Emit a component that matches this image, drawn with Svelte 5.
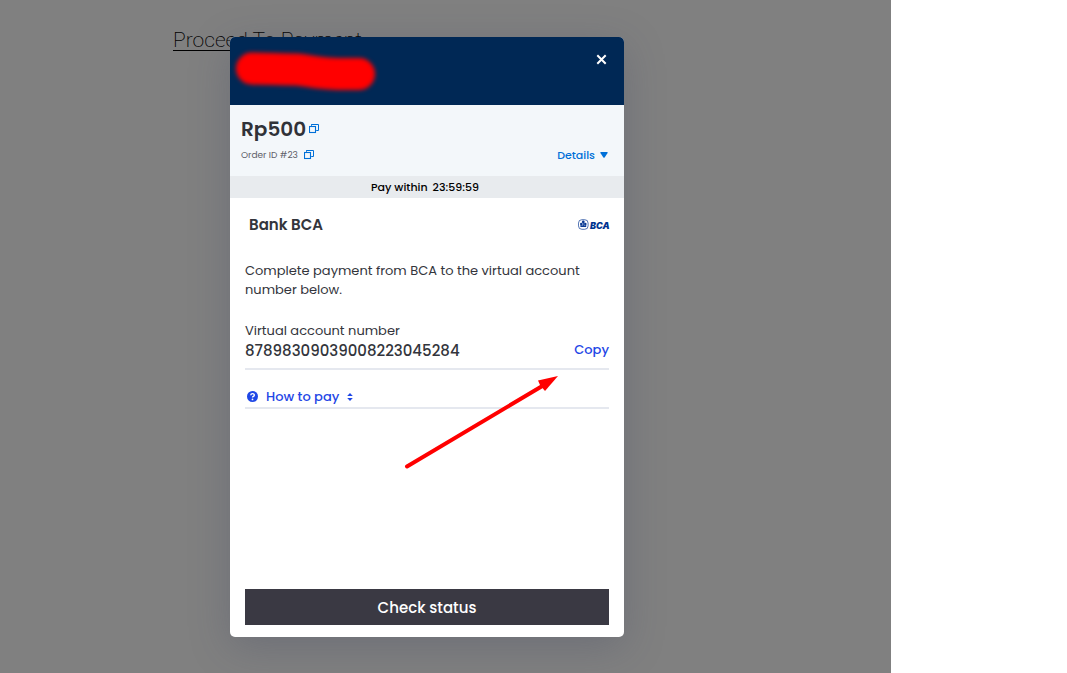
<script>
  let order = { id: 23, amount: 'Rp500' };
  let account = '87898309039008223045284';
  let remaining = '23:59:59';
  let open = true;

  function copy(text) {
    navigator.clipboard?.writeText(String(text));
  }
</script>

{#snippet copyIcon()}
  <svg width="10" height="10" viewBox="0 0 10 10" fill="none" stroke="currentColor" aria-hidden="true">
    <rect x="0.5" y="2.5" width="6" height="6" stroke-width="1.1" />
    <path d="M2.5 0.5H9.5V6.5H8" />
    <path d="M2.5 0v2M7 6.5h2" stroke-width="0.8" />
  </svg>
{/snippet}

<div class="page">
  <main class="shop">
    <a class="proceed" href="#pay">Proceed To Payment</a>

    {#if open}
      <div class="overlay">
        <div class="modal" role="dialog" aria-label="Payment">
          <header>
            <svg class="merchant" width="146" height="46" viewBox="0 0 146 46" aria-hidden="true">
              <path d="M20 18.5C38 19 50 19 64 19.5S82 25 127 24" />
            </svg>
            <button class="close" type="button" aria-label="Close" on:click={() => (open = false)}>
              <svg width="11" height="11" viewBox="0 0 11 11" aria-hidden="true">
                <path d="M1.3 1.3l8.4 8.4M9.7 1.3l-8.4 8.4" stroke="#fff" stroke-width="2" />
              </svg>
            </button>
          </header>

          <section class="summary">
            <div class="amount">
              <strong>{order.amount}</strong>
              <button type="button" aria-label="Copy amount" on:click={() => copy(order.amount)}>{@render copyIcon()}</button>
            </div>
            <div class="order">
              <span>Order ID #{order.id}</span>
              <button type="button" aria-label="Copy order ID" on:click={() => copy(order.id)}>{@render copyIcon()}</button>
              <button class="details" type="button">
                Details
                <svg width="8" height="6" viewBox="0 0 8 6" fill="currentColor" aria-hidden="true">
                  <path d="M1 0h6q1.2 0 .6 1L4.6 5.4q-.6.8-1.2 0L.4 1Q-.2 0 1 0z" />
                </svg>
              </button>
            </div>
          </section>

          <div class="timer"><span>Pay within</span><span>{remaining}</span></div>

          <section class="content">
            <div class="bank">
              <h1>Bank BCA</h1>
              <svg width="33" height="12" viewBox="0 0 33 12" role="img" aria-label="BCA">
                <rect x="1.5" y="0.7" width="9.6" height="9.6" rx="3.4" fill="none" stroke="#0a3a94" stroke-width="0.7" />
                <circle cx="6.3" cy="3" r="1.4" fill="#0a3a94" />
                <circle cx="4.3" cy="5" r="1.3" fill="#0a3a94" />
                <circle cx="8.3" cy="5" r="1.3" fill="#0a3a94" />
                <path d="M5.9 4h.8l.2 2.6 2.3-.6v2H3.4V6l2.3.6z" fill="#0a3a94" />
                <text x="13" y="10">BCA</text>
              </svg>
            </div>

            <p>Complete payment from BCA to the virtual account number below.</p>

            <div class="account">
              <div>
                <div class="label">Virtual account number</div>
                <div class="number">{account}</div>
              </div>
              <button type="button" on:click={() => copy(account)}>Copy</button>
            </div>

            <button class="howto" type="button">
              <svg width="11" height="11" viewBox="0 0 11 11" aria-hidden="true">
                <circle cx="5.5" cy="5.5" r="5.5" fill="#1f47e6" />
                <path d="M3.8 4.3c0-2.2 3.5-2.2 3.5-.1 0 1.2-1.8 1.2-1.8 2.4" fill="none" stroke="#fff" stroke-width="1.4" />
                <circle cx="5.5" cy="8.4" r="0.9" fill="#fff" />
              </svg>
              <span>How to pay</span>
              <svg width="6" height="8" viewBox="0 0 6 8" fill="#1f47e6" aria-hidden="true">
                <path d="M3 0l2.8 3H.2zM3 8L.2 5h5.6z" />
              </svg>
            </button>

            <button class="status" type="button">Check status</button>
          </section>

          <svg class="arrow" width="154" height="94" viewBox="0 0 154 94" aria-hidden="true">
            <path d="M3 90.5L140 9" stroke="#f00" stroke-width="4" stroke-linecap="round" />
            <path d="M154 0L134 4.5L136 9L141 15z" fill="#f00" />
          </svg>
        </div>
      </div>
    {/if}
  </main>
</div>

<style>
  :global(body) {
    margin: 0;
    background: #fff;
  }
  .page {
    min-height: 100vh;
    padding-right: 176px;
    box-sizing: border-box;
    display: flex;
    font-family: Poppins, Inter, sans-serif;
    color: #33353c;
  }
  .shop {
    flex: 1;
    position: relative;
    background: #808080;
    padding: 27px 0 0 173px;
  }
  .proceed {
    font: 200 21px/26px Roboto, sans-serif;
    color: #000;
    text-underline-offset: 3px;
    text-decoration-thickness: 1px;
  }
  .overlay {
    position: absolute;
    inset: 0;
    padding: 37px 37px 36px 0;
    display: flex;
    justify-content: center;
    align-items: stretch;
  }
  .modal {
    position: relative;
    width: 394px;
    display: flex;
    flex-direction: column;
    background: #fff;
    border-radius: 5px;
    box-shadow: 0 10px 40px rgba(50, 60, 90, 0.25);
  }
  button {
    font: inherit;
    padding: 0;
    border: none;
    background: none;
    color: inherit;
    cursor: pointer;
  }
  svg {
    display: block;
    flex: none;
  }
  header {
    height: 68px;
    display: flex;
    justify-content: space-between;
    align-items: flex-start;
    background: #002855;
    border-radius: 5px 5px 0 0;
  }
  .merchant {
    margin: 13px 0 0 2px;
    overflow: visible;
    filter: blur(2px);
  }
  .merchant path {
    fill: none;
    stroke: #f00;
    stroke-width: 32;
    stroke-linecap: round;
  }
  .close {
    margin: 17px 17px 0 0;
  }
  .summary {
    padding: 12px 16px 11px 11px;
    background: #f3f7fa;
  }
  .amount {
    display: flex;
    align-items: center;
    gap: 3px;
    line-height: 24px;
    color: #0070d8;
  }
  .amount strong {
    font-size: 20px;
    font-weight: 600;
    color: #303238;
  }
  .order {
    display: flex;
    align-items: center;
    gap: 6px;
    margin-top: 4px;
    font-size: 9px;
    line-height: 20px;
    color: #0070d8;
  }
  .order span {
    color: #5d6068;
  }
  .details {
    display: flex;
    align-items: center;
    gap: 5px;
    margin-left: auto;
    font-size: 11px;
    font-weight: 500;
  }
  .timer {
    display: flex;
    justify-content: center;
    gap: 5px;
    padding-right: 4px;
    background: #e8ebee;
    font-size: 11px;
    font-weight: 500;
    line-height: 22px;
    color: #000;
  }
  .content {
    flex: 1;
    display: flex;
    flex-direction: column;
    padding: 14px 15px 12px;
  }
  .bank {
    display: flex;
    align-items: center;
    justify-content: space-between;
    padding-left: 4px;
    margin-right: -1px;
  }
  h1 {
    margin: 0;
    font-size: 15px;
    font-weight: 600;
    line-height: 26px;
  }
  .bank text {
    font: italic 900 9px Inter, sans-serif;
    fill: #00338f;
  }
  p {
    margin: 23px 0 22px;
    font-size: 13px;
    line-height: 19px;
  }
  .account {
    display: flex;
    align-items: flex-end;
    justify-content: space-between;
    padding-bottom: 7px;
    border-bottom: 2px solid #e5e8ef;
  }
  .label {
    font-size: 13px;
    line-height: 20px;
  }
  .number {
    font-size: 15px;
    font-weight: 500;
    line-height: 20px;
  }
  .account button {
    font-size: 13px;
    font-weight: 500;
    line-height: 22px;
    color: #1f47e6;
  }
  .howto {
    display: flex;
    align-items: center;
    gap: 8px;
    margin-top: 16px;
    padding: 0 2px;
    border-bottom: 2px solid #e5e8ef;
    font-size: 13px;
    font-weight: 500;
    line-height: 21px;
    color: #1f47e6;
  }
  .status {
    margin-top: auto;
    padding-top: 1px;
    background: #3a3943;
    color: #fff;
    font-size: 15px;
    font-weight: 500;
    line-height: 35px;
  }
  .arrow {
    position: absolute;
    left: 174px;
    top: 339px;
    pointer-events: none;
  }
</style>
